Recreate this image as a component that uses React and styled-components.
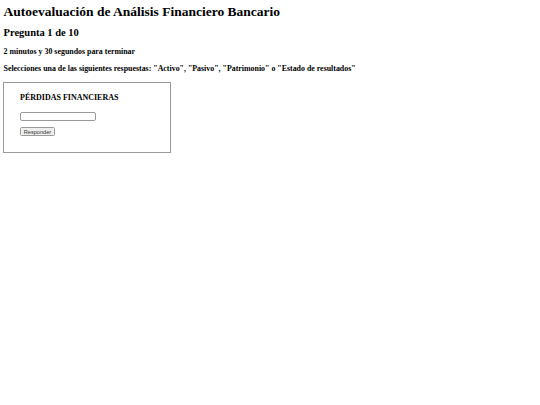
import styled, { createGlobalStyle } from 'styled-components';

const Global = createGlobalStyle`
  html, body {
    margin: 0;
    background: #fff;
  }
  body {
    padding: 4px 3px;
    font-family: "Liberation Serif", "Times New Roman", serif;
    color: #000;
  }
`;

const Title = styled.h1`
  font-size: 13.5px;
  line-height: 16px;
  margin: 0 0 6.5px 0.5px;
  font-weight: bold;
`;

const Question = styled.h2`
  font-size: 10.5px;
  line-height: 12px;
  margin: 0 0 8.3px 0.5px;
`;

const Note = styled.h4`
  font-size: 7.9px;
  line-height: 9px;
  margin: 0 0 ${(p) => p.$gap}px 0.5px;
`;

const Card = styled.div`
  width: 168px;
  border: 1px solid #9a9a9a;
  padding: 10.2px 16px 16px;
  box-sizing: border-box;
`;

const Term = styled.h3`
  font-size: 8px;
  line-height: 9px;
  margin: 0 0 9.8px;
`;

const AnswerInput = styled.input`
  display: block;
  width: 76px;
  height: 8.4px;
  box-sizing: border-box;
  border: 1px solid #999;
  border-radius: 2px;
  background: #fff;
  padding: 0;
  margin: 0 0 6.7px;
`;

const SubmitButton = styled.button`
  display: block;
  box-sizing: border-box;
  width: 35px;
  height: 8.6px;
  font-family: "Liberation Sans", Arial, sans-serif;
  font-size: 5.6px;
  line-height: 6px;
  padding: 0;
  border: 1px solid #9a9a9a;
  border-radius: 1.5px;
  background: #efefef;
  color: #333;
`;

export default function App() {
  return (
    <>
      <Global />
      <Title>Autoevaluación de Análisis Financiero Bancario</Title>
      <Question>Pregunta 1 de 10</Question>
      <Note $gap={8.7}>2 minutos y 30 segundos para terminar</Note>
      <Note $gap={8.8}>
        Selecciones una de las siguientes respuestas: "Activo", "Pasivo", "Patrimonio" o "Estado de
        resultados"
      </Note>
      <Card>
        <Term>PÉRDIDAS FINANCIERAS</Term>
        <AnswerInput type="text" />
        <SubmitButton type="button">Responder</SubmitButton>
      </Card>
    </>
  );
}
